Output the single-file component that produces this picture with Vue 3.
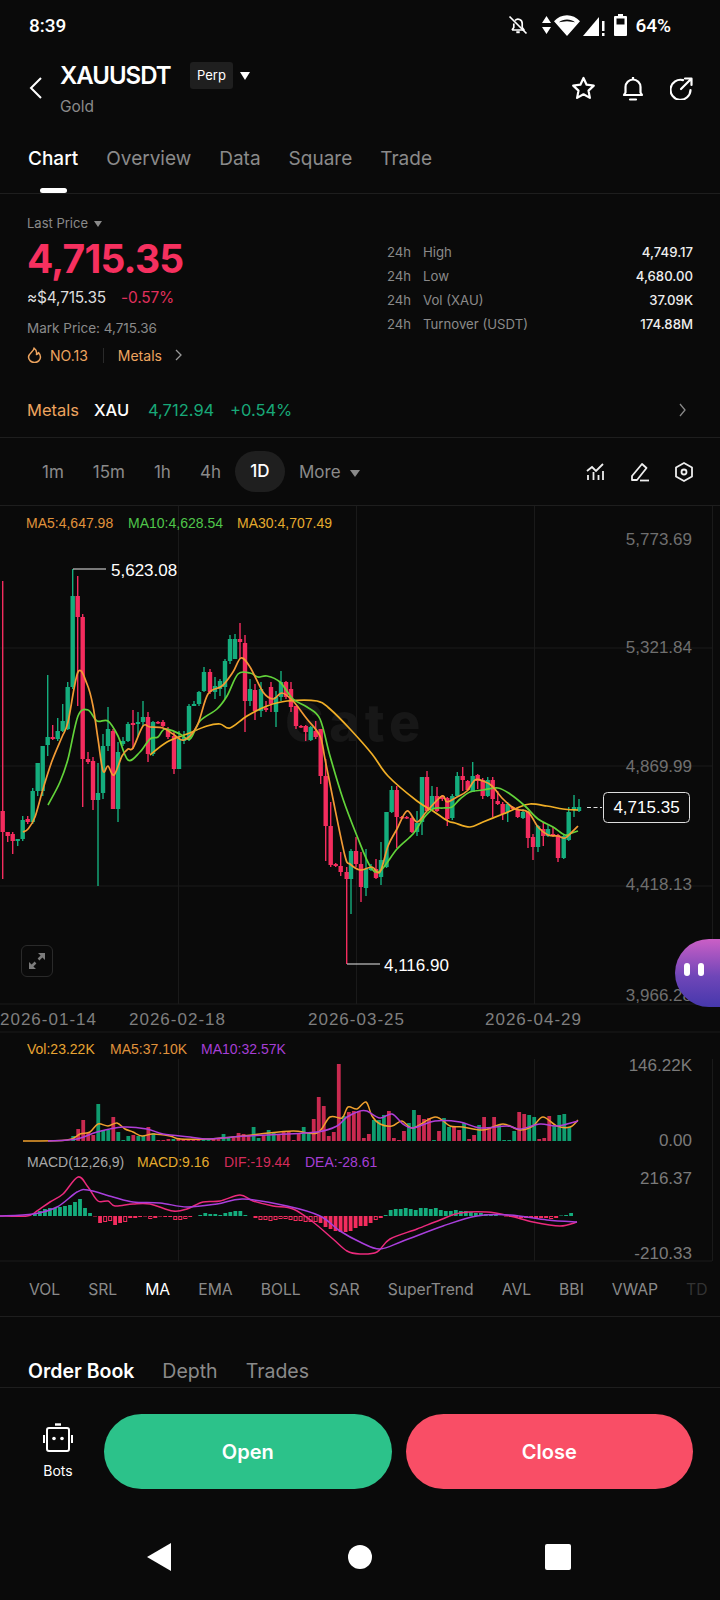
<script setup>
const tabs = ['Chart', 'Overview', 'Data', 'Square', 'Trade']
const stats = [
  ['High', '4,749.17'],
  ['Low', '4,680.00'],
  ['Vol (XAU)', '37.09K'],
  ['Turnover (USDT)', '174.88M']
]
const intervals = ['1m', '15m', '1h', '4h']
const indicators = ['VOL', 'SRL', 'MA', 'EMA', 'BOLL', 'SAR', 'SuperTrend', 'AVL', 'BBI', 'VWAP', 'TD']

// x, green?, body top, body bottom, wick top, wick bottom (page pixels)
const candles = [
  [2.7,0,812,833,582,880],[7.7,0,833,837,833,843],[12.7,0,835,842,833,855],[17.7,1,840,842,840,847],
  [22.7,1,821,840,817,842],[27.7,0,820,823,817,825],[32.7,1,792,823,789,825],[37.7,1,764,792,764,797],
  [42.7,1,747,792,747,797],[47.7,1,738,746,676,757],[52.7,0,738,740,726,741],[57.7,1,732,740,719,742],
  [62.7,1,722,732,705,733],[67.7,1,688,730,683,731],[72.7,1,597,688,570,690],[77.7,0,597,618,577,707],
  [82.7,0,618,760,615,808],[88,0,760,763,753,765],[93,0,762,801,758,811],[98,1,794,801,764,887],
  [103,1,747,794,735,800],[108,1,730,747,708,752],[113,0,732,810,730,810],[118,1,753,810,743,823],
  [123,1,742,745,738,747],[128,1,725,742,723,743],[133,0,724,726,711,750],[138,1,723,725,713,738],
  [143,1,718,723,702,727],[148,0,718,755,713,763],[153,1,723,755,722,757],[158,0,723,724,722,725],
  [163,0,723,727,721,728],[168,0,731,738,728,740],[174,0,737,770,733,775],[179,1,740,770,732,770],
  [184,1,738,742,732,745],[189,1,707,740,705,742],[194,1,705,707,702,707],[199,1,693,705,692,707],
  [204,1,673,692,668,693],[210,0,673,693,670,695],[215,1,687,693,678,700],[220,1,682,690,680,697],
  [225,1,662,688,660,700],[230,1,640,662,636,665],[235,1,640,660,635,660],[240,0,640,643,624,660],
  [245,0,644,702,636,733],[250,1,690,702,680,707],[255,0,691,712,685,721],[261,1,690,712,683,718],
  [266,0,709,711,702,713],[271,0,688,705,683,713],[276,1,698,713,692,728],[281,1,683,698,672,702],
  [286,0,683,698,682,700],[291,0,690,708,683,713],[296,0,707,727,707,730],[301,0,727,728,726,729],
  [305.7,0,727,733,726,742],[310.7,1,728,741,727,742],[315.7,0,732,738,722,740],[320.7,0,730,777,730,785],
  [325.7,0,777,827,760,862],[330.7,0,827,866,803,868],[335.7,0,865,867,864,868],[340.7,0,867,873,853,877],
  [346.7,0,873,880,868,965],[351,1,852,880,850,915],[356,0,852,865,838,868],[361,0,865,888,853,903],
  [366,1,870,889,850,897],[371,1,869,871,865,872],[376,0,870,879,860,880],[381,1,861,878,843,886],
  [386.5,1,813,868,813,869],[391.7,1,791,813,787,814],[396.7,0,791,818,787,849],[401.7,0,818,819,817,820],
  [406.7,0,818,819,817,820],[412,0,819,833,818,834],[417,1,824,833,812,837],[422,1,778,823,778,836],
  [427,0,778,812,772,812],[432,1,797,810,787,812],[437,0,797,812,788,813],[442.3,0,797,800,796,802],
  [447.3,0,799,820,798,827],[452.3,1,797,819,795,821],[457.3,1,777,797,773,798],[462.7,0,777,781,768,792],
  [467.7,0,782,791,781,792],[472.7,1,777,793,763,793],[477.7,0,776,782,775,790],[482.7,0,781,797,779,800],
  [487.7,1,781,797,778,798],[492.7,0,781,800,778,818],[497.7,0,802,805,792,806],[502.7,0,805,815,803,821],
  [507.7,1,805,813,803,823],[512.7,0,808,810,807,811],[517.7,0,811,818,808,819],[523,1,813,819,810,820],
  [528,0,813,839,812,849],[533,0,838,848,835,861],[538,1,827,848,826,853],[543.3,0,830,837,823,847],
  [548,1,830,837,826,838],[553,0,835,837,828,838],[558,0,836,859,835,863],[563.7,1,837,859,836,860],
  [568.7,1,813,841,808,842],[574,1,808,811,796,818],[579,1,808,812,800,813]
]

const ma5 = [[23,833],[28,830],[35,818],[43,790],[52,762],[62,738],[68,723],[78,673],[87,685],[93,707],[98,740],[103,772],[108,767],[114,776],[122,757],[128,750],[133,749],[143,727],[150,728],[163,729],[173,735],[184,741],[197,727],[208,695],[222,687],[233,673],[241,659],[250,668],[263,693],[273,700],[282,694],[293,702],[307,720],[320,737],[325,760],[333,800],[345,857],[350,865],[360,871],[372,868],[380,873],[388,847],[397,830],[407,812],[417,823],[427,812],[442,797],[447,803],[457,798],[467,792],[475,781],[483,782],[492,787],[503,800],[515,810],[528,813],[538,828],[548,836],[558,837],[565,839],[572,833],[578,827]]
const ma10 = [[48,806],[60,783],[68,760],[78,717],[88,711],[97,722],[108,722],[118,737],[128,761],[140,753],[150,740],[158,738],[165,730],[180,735],[190,740],[200,722],[217,710],[227,697],[238,675],[250,674],[258,678],[267,677],[280,683],[293,700],[307,708],[320,720],[330,757],[343,800],[357,837],[370,867],[380,872],[397,850],[413,835],[423,820],[433,810],[443,809],[452,808],[460,800],[470,793],[483,791],[498,789],[510,795],[525,807],[538,820],[553,828],[565,836],[572,834],[578,832]]
const ma30 = [[150,756],[167,743],[187,735],[207,727],[220,725],[230,729],[247,717],[267,707],[287,702],[317,702],[330,710],[350,730],[372,755],[388,777],[417,802],[433,812],[448,822],[455,824],[470,828],[483,823],[503,815],[517,809],[530,805],[547,807],[563,810],[578,811]]

const volumes = [5,-12,-21,-8,-6,37,11,11,-24,9,1,5,-6,5,5,-14,8,-1,-1,-2,2,-3,-2,-1,-2,-2,2,2,-2,-2,7,3,-3,-8,-7,-6,14,3,-6,11,9,-6,-9,-10,-1,-7,14,9,-22,-44,-35,-5,-9,-77,25,-29,-30,-30,-3,-7,21,21,26,-30,-3,-1,-10,18,31,-26,-22,-23,1,-10,23,14,-14,-11,18,-2,-6,16,-24,-14,-24,16,1,1,10,-29,-27,26,24,-2,-3,-25,15,26,27,14]
const volBars = volumes.map((v, i) => ({ x: 71.3 + i * 5.011, h: Math.abs(v), up: v > 0 }))
const volMa5 = [[23,1142],[67,1141],[80,1135],[90,1133],[98,1125],[108,1127],[117,1124],[125,1130],[133,1133],[142,1137],[153,1135],[170,1137],[180,1140],[207,1140],[233,1138],[260,1135],[293,1132],[317,1134],[330,1118],[342,1119],[348,1108],[357,1110],[366,1103],[372,1117],[380,1125],[392,1127],[402,1122],[413,1129],[435,1118],[450,1127],[463,1128],[483,1131],[503,1125],[520,1131],[533,1127],[543,1118],[557,1127],[570,1128],[578,1121]]
const volMa10 = [[48,1142],[77,1140],[97,1133],[123,1128],[147,1130],[163,1135],[190,1138],[207,1140],[233,1138],[267,1136],[317,1133],[337,1127],[347,1118],[360,1112],[367,1112],[380,1119],[392,1115],[403,1125],[413,1129],[435,1122],[460,1123],[480,1129],[507,1127],[520,1130],[540,1125],[557,1127],[578,1122]]

const dif = [[0,1217],[27,1217],[37,1212],[50,1203],[63,1195],[78,1178],[88,1188],[98,1202],[108,1202],[115,1207],[133,1205],[150,1205],[173,1212],[187,1210],[203,1203],[220,1202],[240,1196],[253,1202],[273,1207],[293,1210],[313,1223],[333,1240],[347,1252],[360,1255],[377,1253],[390,1240],[417,1230],[440,1221],[460,1214],[487,1213],[510,1217],[533,1223],[560,1227],[577,1223]]
const dea = [[0,1217],[33,1215],[57,1208],[77,1193],[88,1191],[113,1198],[133,1203],[160,1204],[187,1208],[217,1205],[243,1200],[287,1207],[320,1217],[340,1232],[360,1243],[380,1250],[403,1242],[443,1227],[477,1217],[510,1216],[547,1221],[577,1223]]
const macd = [2,5,7,8,8,9,10,11,14,17,8,3,-.5,-7,-6,-5,-9,-7,-6,-2,-2,-1,-.5,-3,-2,-.5,-1,-1,-4,-4,-3,-1,0,1,3,2,2,1,3,4,5,5,1,0,-2,-4,-4,-5,-4,-3,-3,-4,-5,-5,-6,-6,-6,-7,-11,-13,-15,-16,-16,-15,-12,-10,-10,-7,-4,-2,1,6,7,7,8,7,6,8,8,7,8,6,5,5,6,5,5,4,3,3,2,1,1,0,-.5,-1,-1,-2,-2,-2,-2,-2,-2,-3,-2,.5,1,3]
const macdBars = macd.map((v, i) => ({ x: 33 + i * 5.011, v, hollow: v < -1.5 && v > -6.5 }))

// catmull-rom through the sampled points
function smooth(pts) {
  let d = `M${pts[0][0]} ${pts[0][1]}`
  for (let i = 0; i < pts.length - 1; i++) {
    const a = pts[i - 1] || pts[i]
    const b = pts[i]
    const c = pts[i + 1]
    const e = pts[i + 2] || c
    const c1x = (b[0] + (c[0] - a[0]) / 6).toFixed(1)
    const c1y = (b[1] + (c[1] - a[1]) / 6).toFixed(1)
    const c2x = (c[0] - (e[0] - b[0]) / 6).toFixed(1)
    const c2y = (c[1] - (e[1] - b[1]) / 6).toFixed(1)
    d += ` C${c1x} ${c1y} ${c2x} ${c2y} ${c[0]} ${c[1]}`
  }
  return d
}
</script>

<template>
  <div class="page">
    <div class="status">
      <span class="time">8:39</span>
      <div class="status-right">
        <svg width="20" height="20" viewBox="0 0 20 20" fill="none" stroke="#fff" stroke-width="1.7">
          <path d="M4 15h12l-1.8-2.4V8.5a4.2 4.2 0 0 0-7.2-3M5.8 8.5v4.1L4 15" stroke-linejoin="round" />
          <path d="M8.3 17.2h3.4" stroke-width="2" />
          <path d="M1.5 1.5l17 17" />
        </svg>
        <svg class="st-arrows" width="9" height="18" viewBox="0 0 9 18" fill="#fff">
          <path d="M4.5 0L9 7H0zM4.5 18L0 11h9z" />
        </svg>
        <svg width="26" height="21" viewBox="0 0 26 21" fill="#fff">
          <path d="M13 21L0 6.2C3.5 2.4 8 .2 13 .2s9.500 2.200 13 6zM13 4.500c-3 0-5.800 1-8 2.800 1 .2 5-1 8-1s7 1.200 8 1c-2.200-1.800-5-2.800-8-2.800z" fill-rule="evenodd" />
        </svg>
        <svg width="22" height="21" viewBox="0 0 22 21" fill="#fff">
          <path d="M0 21L16 2v19z" />
          <path d="M19 6h2.500v10H19zM19 18h2.500v3H19z" />
        </svg>
        <svg class="st-batt" width="13" height="22" viewBox="0 0 13 22">
          <path d="M4 0h5v2h3a1 1 0 0 1 1 1v18a1 1 0 0 1-1 1H1a1 1 0 0 1-1-1V3a1 1 0 0 1 1-1h3z" fill="#fff" />
          <path d="M2.500 4.500h8v6h-8z" fill="#0a0a0a" />
        </svg>
        <span class="pct">64%</span>
      </div>
    </div>

    <div class="header">
      <svg class="back" width="13" height="22" viewBox="0 0 13 22" fill="none" stroke="#fff" stroke-width="2">
        <path d="M12 1L2 11l10 10" />
      </svg>
      <div class="title-block">
        <div class="title-row">
          <span class="symbol">XAUUSDT</span>
          <span class="badge">Perp</span>
          <span class="caret caret-white"></span>
        </div>
        <div class="sub">Gold</div>
      </div>
      <div class="header-icons">
        <svg width="25" height="24" viewBox="0 0 25 24" fill="none" stroke="#fff" stroke-width="2.200" stroke-linejoin="round">
          <path d="M12.500 2l3.100 6.700 7.200.9-5.300 5 1.400 7.300-6.400-3.600-6.400 3.600 1.400-7.300-5.300-5 7.200-.9z" />
        </svg>
        <svg width="22" height="25" viewBox="0 0 22 25" fill="none" stroke="#fff" stroke-width="2.200" stroke-linejoin="round">
          <path d="M11 1v2M2 19h18l-1.500-2.500V11a7.500 7.500 0 0 0-15 0v5.500z" />
          <path d="M8 23.500h6" stroke-linecap="round" />
        </svg>
        <svg width="23" height="23" viewBox="0 0 23 23" fill="none" stroke="#fff" stroke-width="2.200" stroke-linecap="round">
          <path d="M13 3.100A10 10 0 1 0 20.500 13" />
          <path d="M11 12L21 2M15 1.500h6.500V8" stroke-linejoin="round" />
        </svg>
      </div>
    </div>

    <div class="tabs">
      <span v-for="(t, i) in tabs" :key="t" class="tab" :class="{ on: i === 0 }">{{ t }}</span>
    </div>

    <div class="info">
      <div class="info-left">
        <div class="last-label">Last Price <span class="caret caret-grey"></span></div>
        <div class="price">4,715.35</div>
        <div class="usd-row">
          <span class="usd">≈$4,715.35</span>
          <span class="change">-0.57%</span>
        </div>
        <div class="mark">Mark Price: 4,715.36</div>
        <div class="rank-row">
          <svg width="15" height="16" viewBox="0 0 15 16" fill="none" stroke="#eda45f" stroke-width="1.500">
            <path d="M7 1c.5 3-5.500 5.500-5.500 9a6 5.500 0 0 0 12 0c0-2-1-3.500-2-4.500-.3 1.200-1 1.800-2 2C10 5 9 2.500 7 1z" stroke-linejoin="round" />
          </svg>
          <span class="rank">NO.13</span>
          <span class="rank-sep"></span>
          <span class="rank">Metals</span>
          <svg width="7" height="12" viewBox="0 0 7 12" fill="none" stroke="#999" stroke-width="1.300">
            <path d="M1 1l5 5-5 5" />
          </svg>
        </div>
      </div>
      <div class="info-right">
        <div v-for="s in stats" :key="s[0]" class="stat">
          <span class="stat-24">24h</span>
          <span class="stat-name">{{ s[0] }}</span>
          <span class="stat-val">{{ s[1] }}</span>
        </div>
      </div>
    </div>

    <div class="metals">
      <span class="m-name">Metals</span>
      <span class="m-sym">XAU</span>
      <span class="m-px">4,712.94</span>
      <span class="m-pct">+0.54%</span>
      <svg class="m-chev" width="7" height="14" viewBox="0 0 7 14" fill="none" stroke="#888" stroke-width="1.300">
        <path d="M1 1l5 6-5 6" />
      </svg>
    </div>

    <div class="intervals">
      <span v-for="v in intervals" :key="v" class="iv">{{ v }}</span>
      <span class="iv iv-on">1D</span>
      <span class="iv iv-more">More <span class="caret caret-grey caret-big"></span></span>
      <div class="iv-icons">
        <svg width="19" height="18" viewBox="0 0 19 18" fill="none" stroke="#eee" stroke-width="1.800">
          <path d="M1 8l5-4 4 4 7-7" />
          <path d="M2 12v5M7.500 9v8M12.500 12v5M17 8v9" />
        </svg>
        <svg width="20" height="20" viewBox="0 0 20 20" fill="none" stroke="#eee" stroke-width="1.800" stroke-linejoin="round">
          <path d="M2 14L12 2l4.500 4L7 18H2z" />
          <path d="M10 18.500h9" />
        </svg>
        <svg width="18" height="20" viewBox="0 0 18 20" fill="none" stroke="#eee" stroke-width="1.800" stroke-linejoin="round">
          <path d="M9 1l8 4.500v9L9 19l-8-4.500v-9z" />
          <circle cx="9" cy="10" r="2.500" />
        </svg>
      </div>
    </div>

    <div class="chart-wrap">
      <svg class="chart" width="720" height="756" viewBox="0 507 720 756">
        <g stroke="#1a1a1a" stroke-width="1">
          <line x1="0" y1="649" x2="712" y2="649" />
          <line x1="0" y1="767" x2="712" y2="767" />
          <line x1="0" y1="887" x2="712" y2="887" />
          <line x1="0" y1="1005" x2="712" y2="1005" />
          <line x1="0" y1="1033" x2="720" y2="1033" />
          <line x1="0" y1="1262" x2="712" y2="1262" />
          <line x1="178.500" y1="507" x2="178.500" y2="1005" />
          <line x1="356.500" y1="507" x2="356.500" y2="1005" />
          <line x1="534.500" y1="507" x2="534.500" y2="1005" />
          <line x1="712.500" y1="507" x2="712.500" y2="1005" />
          <line x1="178.500" y1="1060" x2="178.500" y2="1262" />
          <line x1="534.500" y1="1060" x2="534.500" y2="1262" />
          <line x1="712.500" y1="1060" x2="712.500" y2="1262" />
        </g>

        <text x="285" y="742" class="wm">Gate</text>

        <g v-for="(c, i) in candles" :key="'c' + i" :fill="c[1] ? '#14ad7d' : '#f42c5e'">
          <rect :x="c[0] - 0.7" :y="c[4]" width="1.400" :height="c[5] - c[4]" />
          <rect :x="c[0] - 2.200" :y="c[2]" width="4.400" :height="Math.max(c[3] - c[2], 1.500)" />
        </g>

        <g fill="none" stroke-width="1.700">
          <path :d="smooth(ma30)" stroke="#f0ae26" />
          <path :d="smooth(ma10)" stroke="#62d33a" />
          <path :d="smooth(ma5)" stroke="#f29a35" />
        </g>

        <g class="legend">
          <text x="26" y="529" fill="#e0933c">MA5:4,647.98</text>
          <text x="128" y="529" fill="#4fc64a">MA10:4,628.54</text>
          <text x="237" y="529" fill="#e5ab2e">MA30:4,707.49</text>
        </g>

        <g class="axis">
          <text x="692" y="546">5,773.69</text>
          <text x="692" y="654">5,321.84</text>
          <text x="692" y="773">4,869.99</text>
          <text x="692" y="891">4,418.13</text>
          <text x="692" y="1002">3,966.28</text>
        </g>
        <g class="dates">
          <text x="0" y="1026">2026-01-14</text>
          <text x="129" y="1026">2026-02-18</text>
          <text x="308" y="1026">2026-03-25</text>
          <text x="485" y="1026">2026-04-29</text>
        </g>

        <path d="M73 570H106M347 965H380" stroke="#e8e8e8" stroke-width="1.200" fill="none" />
        <text x="111" y="577" class="mark-text">5,623.08</text>
        <text x="384" y="972" class="mark-text">4,116.90</text>

        <path d="M587 808.500H602" stroke="#ddd" stroke-width="1" stroke-dasharray="4 2.500" />
        <rect x="603.500" y="793.500" width="86" height="30" rx="4" fill="#0a0a0a" stroke="#ddd" />
        <text x="646.500" y="814" text-anchor="middle" class="mark-text">4,715.35</text>

        <!-- volume -->
        <g class="legend">
          <text x="27" y="1055" fill="#e8a532">Vol:23.22K</text>
          <text x="110" y="1055" fill="#e0933c">MA5:37.10K</text>
          <text x="201" y="1055" fill="#a63fd6">MA10:32.57K</text>
        </g>
        <rect v-for="(b, i) in volBars" :key="'v' + i" :x="b.x" :y="1142 - b.h" width="3.800" :height="b.h" :fill="b.up ? '#0f9c6f' : '#c92a50'" />
        <g fill="none" stroke-width="1.500">
          <path :d="smooth(volMa5)" stroke="#f0a02e" />
          <path :d="smooth(volMa10)" stroke="#b13fd8" />
        </g>
        <g class="axis axis-sm">
          <text x="692" y="1072">146.22K</text>
          <text x="692" y="1147">0.00</text>
          <text x="692" y="1185">216.37</text>
          <text x="692" y="1260">-210.33</text>
        </g>

        <!-- macd -->
        <g class="legend">
          <text x="27" y="1168" fill="#a8a8a8">MACD(12,26,9)</text>
          <text x="137" y="1168" fill="#e5ab2e">MACD:9.16</text>
          <text x="224" y="1168" fill="#d42c5a">DIF:-19.44</text>
          <text x="305" y="1168" fill="#a63fd6">DEA:-28.61</text>
        </g>
        <g v-for="(b, i) in macdBars" :key="'m' + i">
          <rect v-if="b.v !== 0 && !b.hollow" :x="b.x" :y="b.v > 0 ? 1217 - b.v : 1217" width="3.800" :height="Math.abs(b.v)" :fill="b.v > 0 ? '#14ad7d' : '#f42c5e'" />
          <rect v-else-if="b.hollow" :x="b.x + 0.5" y="1217.500" width="3" :height="Math.abs(b.v) - 1" fill="none" stroke="#f42c5e" stroke-width="1" />
        </g>
        <g fill="none" stroke-width="1.500">
          <path :d="smooth(dif)" stroke="#ec2a7c" />
          <path :d="smooth(dea)" stroke="#a93fdc" />
        </g>
      </svg>

      <div class="expand">
        <svg width="18" height="18" viewBox="0 0 18 18" fill="#7c7c7c">
          <path d="M10 1h7v7l-2.600-2.600-3 3-1.800-1.800 3-3zM8 17H1v-7l2.600 2.600 3-3 1.800 1.800-3 3z" />
        </svg>
      </div>
      <div class="bubble">
        <span class="eye"></span>
        <span class="eye"></span>
      </div>
    </div>

    <div class="ind-row">
      <span v-for="n in indicators" :key="n" class="ind" :class="{ on: n === 'MA', fade: n === 'TD' }">{{ n }}</span>
    </div>

    <div class="book-tabs">
      <span class="book on">Order Book</span>
      <span class="book">Depth</span>
      <span class="book">Trades</span>
    </div>

    <div class="actions">
      <div class="bots">
        <svg width="30" height="29" viewBox="0 0 30 29" fill="none" stroke="#fff" stroke-width="2">
          <rect x="4" y="5" width="22" height="23" rx="2" />
          <path d="M12 1.500h6" stroke-width="2.400" />
          <path d="M1 12v8M29 12v8" stroke-width="2" />
          <circle cx="11" cy="15.500" r="1.800" fill="#fff" stroke="none" />
          <circle cx="19" cy="15.500" r="1.800" fill="#fff" stroke="none" />
        </svg>
        <span class="bots-label">Bots</span>
      </div>
      <button class="btn open">Open</button>
      <button class="btn close">Close</button>
    </div>

    <div class="nav">
      <span class="nav-back"></span>
      <span class="nav-home"></span>
      <span class="nav-recent"></span>
    </div>
  </div>
</template>

<style>
html, body { background: #0a0a0a; }
</style>

<style scoped>
.page { width: 720px; height: 1600px; background: #0a0a0a; color: #fff; font-family: Inter, "Noto Sans", sans-serif; overflow: hidden; }

.status { height: 50px; display: flex; align-items: center; justify-content: space-between; padding: 0 49px 0 29px; font-family: Roboto, sans-serif; }
.time { font-size: 19px; font-weight: 500; }
.status-right { display: flex; align-items: center; }
.status-right svg { margin-right: 3px; }
.st-arrows { margin-left: 11px; }
.st-batt { margin-left: 6px; margin-right: 8px !important; }
.pct { font-size: 19px; font-weight: 500; }

.header { height: 94px; box-sizing: border-box; display: flex; position: relative; padding: 12px 27px 0 29px; }
.back { margin-top: 15px; }
.title-block { margin-left: 18px; }
.title-row { display: flex; align-items: center; height: 27px; }
.symbol { font-size: 24px; font-weight: 600; letter-spacing: -1px; width: 130px; }
.badge { background: #1f1f1f; border-radius: 3px; width: 43px; height: 27px; line-height: 27px; text-align: center; font-size: 13px; }
.sub { font-size: 15.500px; color: #8a8a8a; margin-top: 10px; line-height: 16px; }
.header-icons { margin-left: auto; display: flex; gap: 26px; align-items: center; height: 24px; margin-top: 14px; }

.caret { display: inline-block; width: 0; height: 0; border-left: 5px solid transparent; border-right: 5px solid transparent; border-top: 8px solid #fff; }
.caret-white { margin-left: 7px; }
.caret-grey { border-left-width: 4.500px; border-right-width: 4.500px; border-top: 6px solid #8a8a8a; margin-left: 2px; vertical-align: 1px; }
.caret-big { border-left-width: 5px; border-right-width: 5px; border-top-width: 7px; margin-left: 5px; }

.tabs { height: 50px; display: flex; gap: 28px; padding: 0 28px; border-bottom: 1px solid #1e1e1e; box-sizing: border-box; }
.tab { position: relative; font-size: 19px; line-height: 30px; color: #8a8a8a; }
.tab.on { color: #fff; font-weight: 500; }
.tab.on::after { content: ""; position: absolute; left: 12px; width: 27px; height: 5px; border-radius: 3px; background: #fff; top: 44px; }

.info { height: 196px; display: flex; justify-content: space-between; padding: 0 27px; box-sizing: border-box; }
.info-left { padding-top: 21px; }
.last-label { font-size: 13px; line-height: 16px; color: #8a8a8a; }
.price { font-size: 39px; font-weight: 700; line-height: 44px; margin-top: 6px; color: #f6305f; letter-spacing: -0.8px; }
.usd-row { display: flex; gap: 15px; font-size: 15.500px; line-height: 20px; margin-top: 7px; letter-spacing: -0.2px; }
.usd { color: #ddd; }
.change { color: #e0305c; }
.mark { font-size: 13.500px; line-height: 18px; color: #8a8a8a; margin-top: 11px; }
.rank-row { display: flex; align-items: center; margin-top: 9px; height: 18px; font-size: 14px; color: #eda45f; }
.rank { margin-left: 8px; }
.rank-sep { width: 1px; height: 15px; background: #2a2a2a; margin-left: 15px; margin-right: 6px; }
.rank-row svg:last-child { margin-left: 13px; }
.info-right { width: 306px; padding-top: 46px; }
.stat { display: flex; line-height: 24px; font-size: 13.200px; color: #8a8a8a; }
.stat-24 { width: 36px; }
.stat-val { margin-left: auto; color: #eee; font-weight: 500; }

.metals { height: 47px; display: flex; align-items: flex-start; padding: 0 34px 0 27px; font-size: 16.500px; line-height: 40px; border-bottom: 1px solid #1e1e1e; }
.m-name { color: #eda45f; width: 67px; }
.m-sym { color: #fff; width: 54px; font-weight: 500; }
.m-px { color: #18a878; width: 82px; }
.m-pct { color: #18a878; }
.m-chev { margin-left: auto; margin-top: 13px; }

.intervals { height: 67px; display: flex; align-items: center; padding: 0 27px 0 42px; border-bottom: 1px solid #1e1e1e; font-size: 17px; color: #8a8a8a; }
.iv { margin-right: 29px; }
.iv-on { width: 50px; height: 41px; line-height: 41px; text-align: center; border-radius: 21px; background: #1f1f1f; color: #fff; margin: 0 14px 0 -15px; font-weight: 500; }
.iv-more { margin: 0; }
.iv-icons { margin-left: auto; display: flex; gap: 25px; align-items: center; }

.chart-wrap { position: relative; height: 756px; }
.chart { display: block; }
.wm { font-family: Inter, sans-serif; font-size: 52px; font-weight: 800; letter-spacing: 5px; fill: #171717; }
.legend text { font-family: "Liberation Sans", sans-serif; font-size: 14px; }
.axis text { font-family: "Liberation Sans", sans-serif; font-size: 17px; fill: #6f6f6f; text-anchor: end; }
.axis-sm text { fill: #7a7a7a; }
.dates text { font-family: "Liberation Sans", sans-serif; font-size: 17px; letter-spacing: 1px; fill: #7f7f7f; }
.mark-text { font-family: "Liberation Sans", sans-serif; font-size: 17px; fill: #fff; }
.expand { position: absolute; left: 21px; top: 439px; width: 32px; height: 32px; box-sizing: border-box; border: 1px solid #2a2a2a; border-radius: 6px; display: flex; align-items: center; justify-content: center; }
.bubble { position: absolute; right: 0; top: 433px; width: 45px; height: 68px; border-radius: 34px 0 0 34px; background: linear-gradient(180deg, #cb5fc6 0%, #6f46b8 55%, #4638ac 100%); display: flex; gap: 8px; padding-left: 9px; padding-top: 24px; box-sizing: border-box; }
.eye { width: 6px; height: 13px; border-radius: 3px; background: #fff; }

.ind-row { height: 54px; display: flex; align-items: center; gap: 28px; padding: 0 0 0 29px; font-size: 15.700px; color: #8a8a8a; border-bottom: 1px solid #1e1e1e; white-space: nowrap; overflow: hidden; }
.ind.on { color: #fff; }
.ind.fade { color: #333; }

.book-tabs { height: 71px; display: flex; gap: 28px; padding: 42px 28px 0; box-sizing: border-box; border-bottom: 1px solid #1e1e1e; }
.book { font-size: 19.500px; line-height: 24px; color: #8a8a8a; }
.book.on { color: #fff; font-weight: 600; }

.actions { display: flex; padding: 26px 27px 0 28px; align-items: flex-start; }
.bots { width: 60px; margin-right: 16px; margin-top: 9px; display: flex; flex-direction: column; align-items: center; }
.bots-label { font-size: 14px; line-height: 16px; margin-top: 11px; }
.btn { flex: 1; height: 75px; border: none; border-radius: 38px; color: #fff; font-family: inherit; font-size: 20px; font-weight: 600; }
.open { background: #2cc28a; margin-right: 14px; }
.close { background: #f94e66; }

.nav { display: flex; align-items: center; margin-top: 54px; padding-left: 147px; height: 28px; }
.nav-back { width: 0; height: 0; border-top: 14px solid transparent; border-bottom: 14px solid transparent; border-right: 24px solid #fff; }
.nav-home { width: 24px; height: 24px; border-radius: 50%; background: #fff; margin-left: 177px; }
.nav-recent { width: 26px; height: 26px; border-radius: 2px; background: #fff; margin-left: 173px; }
</style>
